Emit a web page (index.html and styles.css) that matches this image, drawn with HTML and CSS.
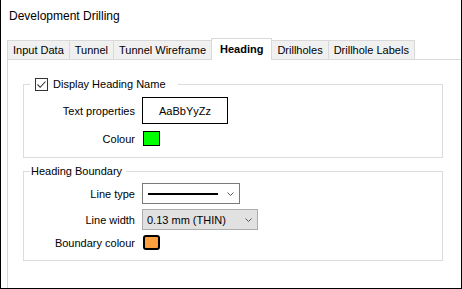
FILE: index.html
```html
<!DOCTYPE html>
<html lang="en">
<head>
  <meta charset="UTF-8">
  <title>Development Drilling</title>
  <link rel="stylesheet" href="styles.css">
</head>
<body>
  <div class="window">
    <div class="title">Development Drilling</div>

    <div class="tabs">
      <div class="tab">Input Data</div>
      <div class="tab">Tunnel</div>
      <div class="tab">Tunnel Wireframe</div>
      <div class="tab active">Heading</div>
      <div class="tab">Drillholes</div>
      <div class="tab">Drillhole Labels</div>
    </div>

    <div class="panel">
      <fieldset class="group group-name">
        <legend>
          <span class="check">
            <svg width="11" height="11" viewBox="0 0 11 11"><path d="M1.5 5.5 L4.2 8.3 L9.5 2.5" fill="none" stroke="#333" stroke-width="1.1"/></svg>
          </span>
          Display Heading Name
        </legend>
        <div class="row">
          <span class="label">Text properties</span>
          <div class="textprops">AaBbYyZz</div>
        </div>
        <div class="row">
          <span class="label">Colour</span>
          <span class="swatch green"></span>
        </div>
      </fieldset>

      <fieldset class="group group-boundary">
        <legend>Heading Boundary</legend>
        <div class="row">
          <span class="label">Line type</span>
          <div class="combo combo-line">
            <span class="line"></span>
            <svg class="chev" width="7" height="4" viewBox="0 0 7 4"><path d="M0.5 0.5 L3.5 3.5 L6.5 0.5" fill="none" stroke="#555" stroke-width="1"/></svg>
          </div>
        </div>
        <div class="row">
          <span class="label">Line width</span>
          <div class="combo combo-width">
            <span>0.13 mm (THIN)</span>
            <svg class="chev" width="7" height="4" viewBox="0 0 7 4"><path d="M0.5 0.5 L3.5 3.5 L6.5 0.5" fill="none" stroke="#555" stroke-width="1"/></svg>
          </div>
        </div>
        <div class="row">
          <span class="label">Boundary colour</span>
          <span class="swatch orange"></span>
        </div>
      </fieldset>
    </div>
  </div>
</body>
</html>
```

FILE: styles.css
```css
body { margin: 0; font-family: "Liberation Sans", Arial, sans-serif; font-size: 11px; color: #000; background: #fff; }

.window { width: 462px; height: 289px; box-sizing: border-box; border: 1px solid #000; border-top: 0; display: flex; flex-direction: column; }
.title { font-size: 12px; line-height: 16px; padding: 8px 0 0 8px; }

.tabs { display: flex; align-items: flex-end; height: 21px; margin: 14px 0 0 6px; }
.tab { height: 19px; line-height: 18px; box-sizing: border-box; border: 1px solid #d9d9d9; border-bottom: 0; background: #f0f0f0; padding: 0 5px; margin-right: -1px; white-space: nowrap; }
.tab.active { height: 22px; line-height: 20px; margin-bottom: -1px; background: #fff; font-weight: bold; padding: 0 8px; position: relative; z-index: 1; }

.panel { flex: 1; margin-left: 6px; border-top: 1px solid #d9d9d9; border-left: 1px solid #d9d9d9; }

.group { margin: 0 0 0 15px; width: 420px; min-width: 0; box-sizing: border-box; border: 1px solid #dcdcdc; padding: 5px 0 11px 6px; }
.group legend { padding: 0 4px 0 1px; line-height: 16px; }
.group-name { margin-top: 16px; }
.group-name legend { display: flex; align-items: center; padding: 0 12px 0 5px; }
.group-boundary { margin-top: 5px; padding: 4px 0 10px 6px; }

.check { width: 13px; height: 13px; box-sizing: border-box; border: 1px solid #333; display: flex; align-items: center; justify-content: center; margin-right: 5px; background: #fff; }

.row { display: flex; align-items: center; gap: 7px; }
.group-name .row + .row { margin-top: 7px; }
.group-boundary .row + .row { margin-top: 5px; }
.label { width: 105px; text-align: right; }

.textprops { width: 86px; height: 27px; box-sizing: border-box; border: 1px solid #000; display: flex; align-items: center; justify-content: center; }

.swatch { width: 17px; height: 15px; box-sizing: border-box; margin-left: 1px; }
.green { background: #00ff00; border: 1px solid #000; }
.orange { background: #ffa040; border: 2px solid #000; border-radius: 3px; }

.combo { height: 21px; box-sizing: border-box; border: 1px solid #7a7a7a; background: #fff; display: flex; align-items: center; justify-content: space-between; padding: 0 5px; }
.combo-line { width: 98px; }
.combo-line .line { width: 70px; height: 2px; background: #000; }
.combo-width { width: 116px; background: #e1e1e1; border-color: #adadad; padding: 0 5px 0 4px; }
```
